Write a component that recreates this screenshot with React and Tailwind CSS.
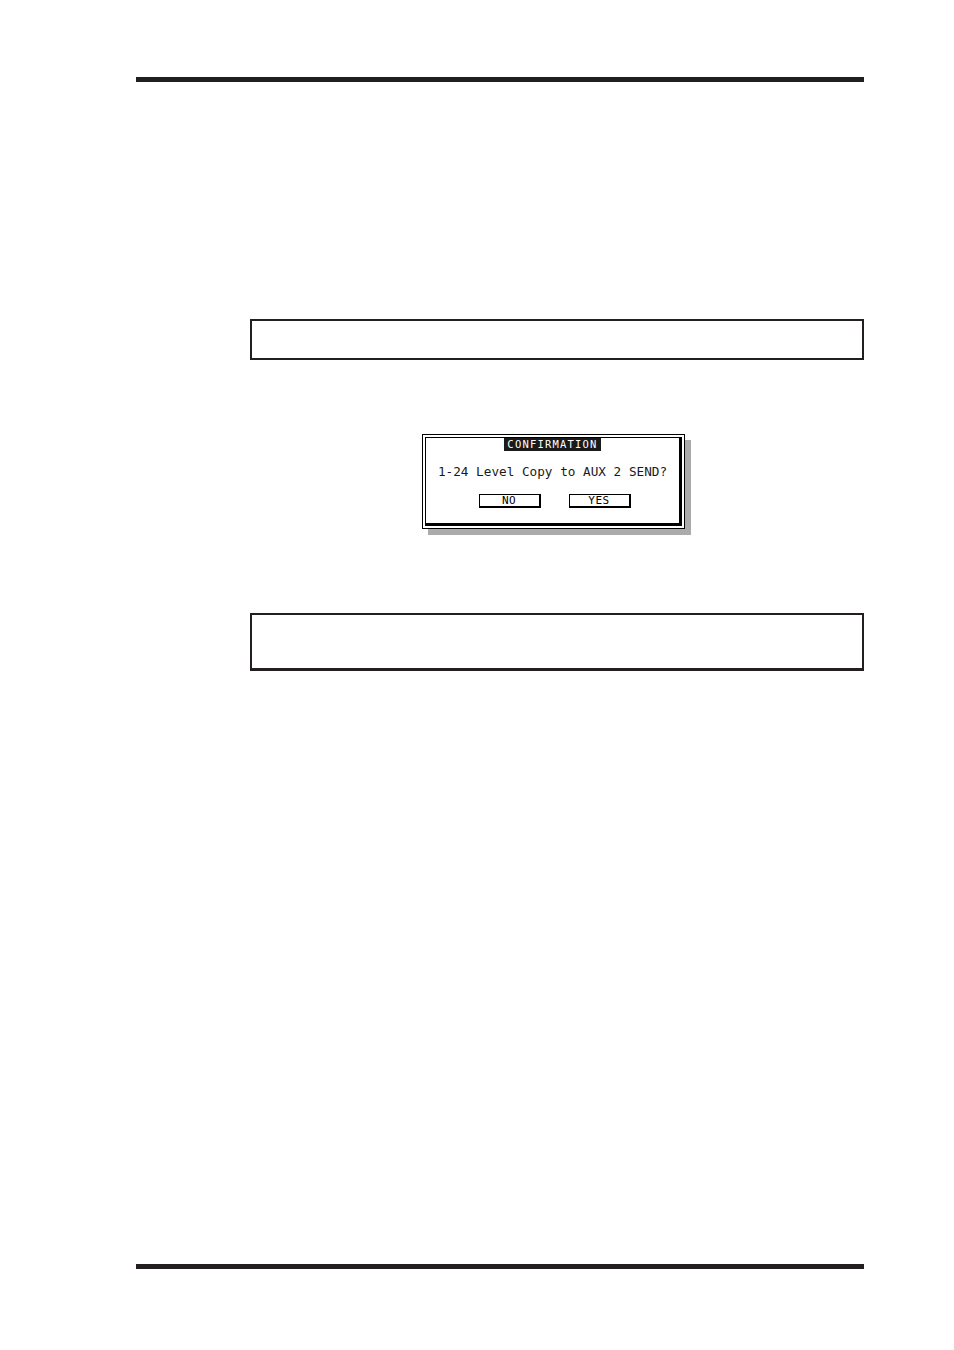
import React from 'react';

const Bar = ({ className = '' }) => (
  <div className={`ml-[136px] w-[728px] h-[5px] bg-[#231f20] ${className}`} />
);

const LcdButton = ({ label }) => (
  <div className="w-[62px] h-[14px] flex items-center justify-center bg-white border border-black border-r-[2px] border-b-[2px] text-[11px] leading-none text-black tracking-[0.5px]">
    {label}
  </div>
);

const ConfirmDialog = () => (
  <div className="ml-[422px] w-[263px] h-[95px] bg-white border border-black p-[2px] shadow-[6px_6px_0_#ababab]">
    <div className="h-full border-t border-l border-r-[3px] border-b-[3px] border-black flex flex-col items-center font-['DejaVu_Sans_Mono','Liberation_Mono',monospace]">
      {/* Title tab */}
      <div className="px-[3px] h-[13px] bg-[#1a1a1a] text-white text-[10.5px] leading-[13px] tracking-[1.2px]">
        CONFIRMATION
      </div>
      {/* Message */}
      <div className="mt-[13px] text-[12.7px] leading-[16px] text-[#1a1a1a] whitespace-nowrap">
        1-24 Level Copy to AUX 2 SEND?
      </div>
      {/* Buttons */}
      <div className="mt-[14px] ml-[4px] flex gap-[28px]">
        <LcdButton label="NO" />
        <LcdButton label="YES" />
      </div>
    </div>
  </div>
);

export default function App() {
  return (
    <div className="w-[954px] h-[1350px] bg-white flex flex-col pt-[77px] font-['Liberation_Sans',sans-serif]">
      <Bar />

      {/* Note box */}
      <div className="mt-[237px] ml-[250px] w-[614px] h-[41px] border-2 border-[#231f20]" />

      <div className="mt-[74px]">
        <ConfirmDialog />
      </div>

      {/* Second note box */}
      <div className="mt-[84px] ml-[250px] w-[614px] h-[58px] border-2 border-b-[3px] border-[#231f20]" />

      <Bar className="mt-[593px]" />
    </div>
  );
}
